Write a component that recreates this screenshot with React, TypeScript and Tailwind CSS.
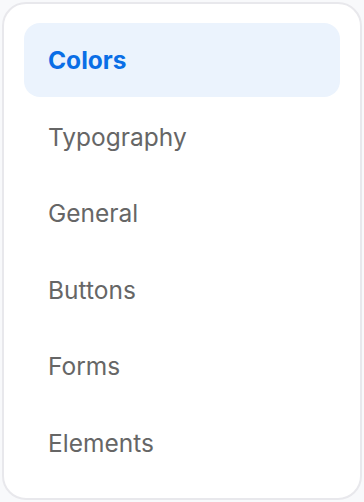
const items = ["Colors", "Typography", "General", "Buttons", "Forms", "Elements"];

export default function App() {
  const active = "Colors";

  return (
    <div className="min-h-screen bg-[#f8f9fb] p-[2px] font-['Inter',Arial,sans-serif]">
      <nav className="flex h-[498px] flex-col gap-[2.6px] rounded-[24px] border-2 border-[#e8e8ec] bg-white px-[20px] py-[19px]">
        {items.map((item) => (
          <a
            key={item}
            href="#"
            className={
              item === active
                ? "flex h-[74px] items-center rounded-[16px] bg-[#ebf3fd] px-[24px] pt-[1px] text-[24.5px] font-bold text-[#0a6ee6]"
                : "flex h-[74px] items-center rounded-[16px] px-[24px] pt-[2px] text-[24.5px] text-[#666666]"
            }
          >
            {item}
          </a>
        ))}
      </nav>
    </div>
  );
}
